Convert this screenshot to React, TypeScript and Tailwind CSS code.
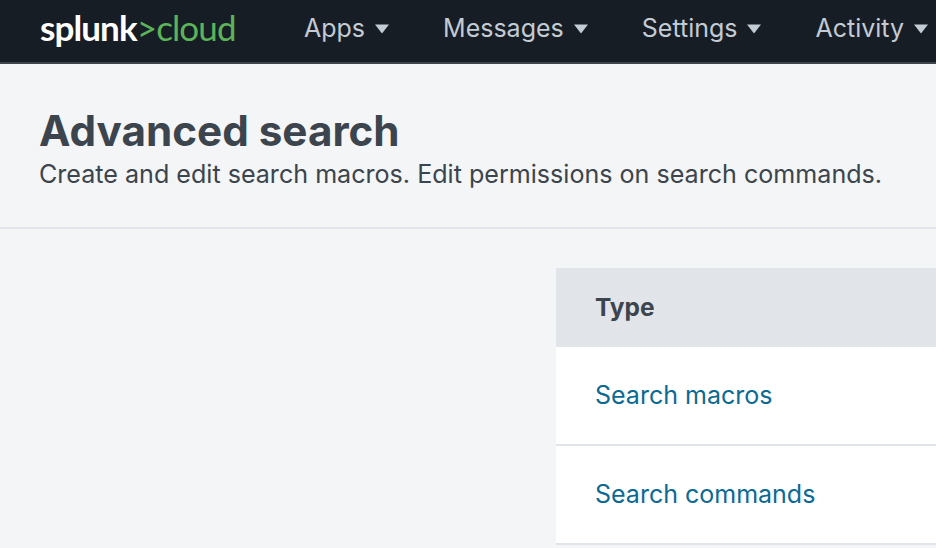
export default function App() {
  const nav = ["Apps", "Messages", "Settings", "Activity"];
  return (
    <div className="h-[548px] w-[936px] overflow-hidden bg-[#f3f5f6] font-['Inter',sans-serif]">
      <nav className="flex h-[64px] items-center whitespace-nowrap border-b-2 border-[#3c444d] bg-[#171d24] pl-[40px]">
        <div className="flex w-[264px] items-baseline pb-[7px] font-['Lato',sans-serif] text-[35px] leading-none tracking-[-0.9px]">
          <span className="font-bold text-white">splunk</span>
          <span className="text-[#5cb35a]">&gt;cloud</span>
        </div>
        <div className="flex gap-[54px] pb-[5px]">
          {nav.map((n) => (
            <div key={n} className="flex items-center gap-[10px] text-[25px] leading-none text-[#c3cbd4]">
              <span>{n}</span>
              <svg width="14" height="10" viewBox="0 0 14 10" className="fill-[#c3cbd4]"><path d="M0 0.5h14L7 9.5z" /></svg>
            </div>
          ))}
        </div>
      </nav>
      <header className="h-[165px] border-b-2 border-[#e1e4e8] pl-[39px] pt-[43px]">
        <h1 className="text-[42.2px] font-bold leading-[48px] text-[#3c444d]">Advanced search</h1>
        <p className="text-[25.1px] leading-[38px] text-[#3c444d]">Create and edit search macros. Edit permissions on search commands.</p>
      </header>
      <section className="ml-[556px] mt-[39px]">
        <div className="flex h-[79px] items-center bg-[#e1e4e8] pl-[39px] text-[24.5px] font-bold text-[#3c444d]">Type</div>
        <div className="flex h-[99px] items-center border-b-2 border-[#e1e4e8] bg-white pl-[39px] text-[25px] text-[#0b6a94]">Search macros</div>
        <div className="flex h-[99px] items-center border-b-2 border-[#e1e4e8] bg-white pl-[39px] text-[25px] text-[#0b6a94]">Search commands</div>
      </section>
    </div>
  );
}
